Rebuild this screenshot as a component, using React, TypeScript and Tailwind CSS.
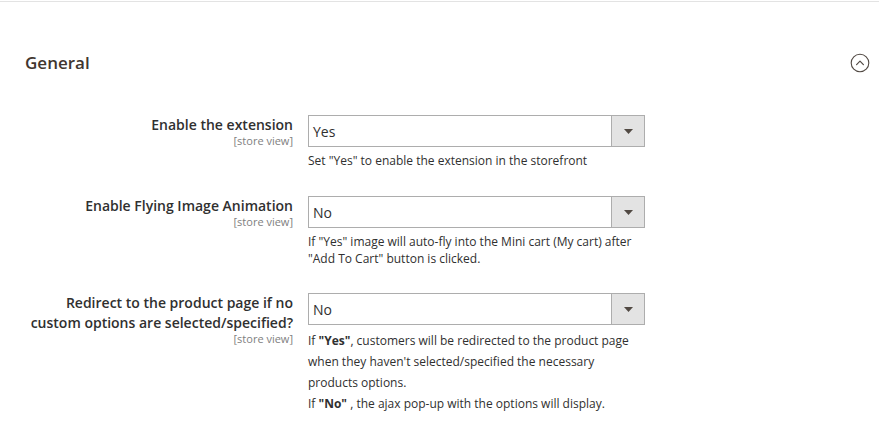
import React from "react";

interface Field {
  label: React.ReactNode;
  value: string;
  note: React.ReactNode;
  noteLeading: string;
  gap: string;
}

const fields: Field[] = [
  {
    label: "Enable the extension",
    value: "Yes",
    note: <span className="block">Set "Yes" to enable the extension in the storefront</span>,
    noteLeading: "leading-[17px]",
    gap: "mt-0",
  },
  {
    label: "Enable Flying Image Animation",
    value: "No",
    note: (
      <>
        <span className="block whitespace-nowrap">If "Yes" image will auto-fly into the Mini cart (My cart) after</span>
        <span className="block whitespace-nowrap">"Add To Cart" button is clicked.</span>
      </>
    ),
    noteLeading: "leading-[17px]",
    gap: "mt-[27px]",
  },
  {
    label: (
      <>
        Redirect to the product page if no
        <br />
        custom options are selected/specified?
      </>
    ),
    value: "No",
    note: (
      <>
        <span className="block whitespace-nowrap">
          If <b className="font-bold">"Yes"</b>, customers will be redirected to the product page
        </span>
        <span className="block whitespace-nowrap">when they haven't selected/specified the necessary</span>
        <span className="block whitespace-nowrap">products options.</span>
        <span className="block whitespace-nowrap">
          If <b className="font-bold">"No"</b> , the ajax pop-up with the options will display.
        </span>
      </>
    ),
    noteLeading: "leading-[21px]",
    gap: "mt-[26px]",
  },
];

const CollapseIcon = () => (
  <svg width="20" height="20" viewBox="0 0 20 20" fill="none">
    <circle cx="10" cy="10" r="8.8" stroke="#514943" strokeWidth="1.1" />
    <path d="M6.6 11.6 L10 8.2 L13.4 11.6" stroke="#514943" strokeWidth="1.2" strokeLinecap="round" strokeLinejoin="round" />
  </svg>
);

const SelectBox = ({ value }: { value: string }) => (
  <div className="flex h-[32px] w-[337px] border border-[#adadad] bg-white">
    <div className="flex flex-1 items-center pl-[4px] text-[14px] text-[#303030]">{value}</div>
    <div className="flex w-[33px] items-center justify-center border-l border-[#adadad] bg-[#e3e3e3]">
      <svg width="9" height="5" viewBox="0 0 9 5">
        <path d="M0 0 H9 L4.5 5 Z" fill="#514943" />
      </svg>
    </div>
  </div>
);

export default function App() {
  return (
    <div
      className="h-[436px] w-[879px] overflow-hidden bg-white pt-px"
      style={{ fontFamily: '"Open Sans", "Noto Sans", sans-serif' }}
    >
      <div className="border-t border-[#e3e3e3]">
        <div className="flex items-center justify-between pl-[25px] pr-[9px] pt-[49px]">
          <h2 className="text-[17px] font-semibold leading-[24px] text-[#41362f]">General</h2>
          <CollapseIcon />
        </div>

        <div className="mt-[40px] flex flex-col">
          {fields.map((f, i) => (
            <div key={i} className={`flex ${f.gap}`}>
              <div className="w-[293px] text-right">
                <div className="text-[14px] font-semibold leading-[20px] text-[#303030]">{f.label}</div>
                <div className="text-[11px] leading-[12px] text-[#808080]">[store view]</div>
              </div>
              <div className="ml-[15px]">
                <SelectBox value={f.value} />
                <div className={`mt-[5px] text-[12px] text-[#303030] ${f.noteLeading}`}>{f.note}</div>
              </div>
            </div>
          ))}
        </div>
      </div>
    </div>
  );
}
